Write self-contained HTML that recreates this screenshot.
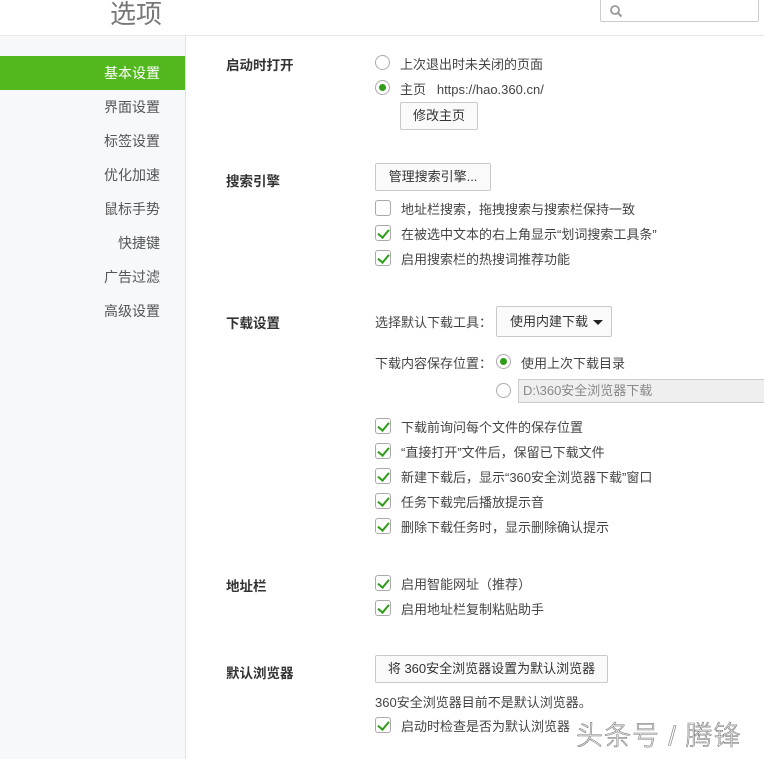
<!DOCTYPE html>
<html><head><meta charset="utf-8"><style>
*{margin:0;padding:0;box-sizing:border-box}
body{width:764px;height:759px;overflow:hidden;background:#fff;font-family:"Liberation Sans","Noto Sans CJK SC",sans-serif;font-size:13px;color:#333;position:relative}
.a{position:absolute;white-space:nowrap}
.title{left:110px;top:-6px;font-size:26px;color:#777}
.search{left:600px;top:-2px;width:159px;height:24px;border:1px solid #ccc;border-radius:2px}
.hline{left:0;top:35px;width:764px;height:1px;background:#e8e8e8}
.side{left:0;top:36px;width:186px;height:723px;background:#f7f8fa;border-right:1px solid #e2e2e2}
.nav{left:0;width:185px;height:34px;line-height:34px;text-align:right;padding-right:25px;color:#555;font-size:14px}
.nav.on{background:#52b81d;color:#fff}
.h{left:226px;font-weight:bold;font-size:13.5px;color:#333}
.cb{width:16px;height:16px;border:1px solid #aaa;border-radius:3px;background:#fff;left:375px}
.cb.k::after{content:"";position:absolute;left:4px;top:1px;width:5px;height:9px;border:solid #2f9d1a;border-width:0 2.5px 2.5px 0;transform:rotate(40deg)}
.rd{width:15px;height:15px;border:1px solid #aaa;border-radius:50%;background:#fff}
.rd.k::after{content:"";position:absolute;left:3px;top:3px;width:7px;height:7px;border-radius:50%;background:#2f9d1a}
.t{color:#444}
.btn{border:1px solid #c9c9c9;border-radius:2px;background:#fafafa;height:28px;line-height:26px;text-align:center;color:#333}
</style></head><body>
<div class="a title">选项</div>
<div class="a search"><svg width="14" height="14" style="position:absolute;left:8px;top:5px"><circle cx="6" cy="6" r="4" fill="none" stroke="#999" stroke-width="1.8"/><line x1="9" y1="9" x2="12.5" y2="12.5" stroke="#999" stroke-width="2"/></svg></div>
<div class="a hline"></div>
<div class="a side"></div>
<div class="a nav on" style="top:56px">基本设置</div>
<div class="a nav" style="top:90px">界面设置</div>
<div class="a nav" style="top:124px">标签设置</div>
<div class="a nav" style="top:158px">优化加速</div>
<div class="a nav" style="top:192px">鼠标手势</div>
<div class="a nav" style="top:226px">快捷键</div>
<div class="a nav" style="top:260px">广告过滤</div>
<div class="a nav" style="top:294px">高级设置</div>

<div class="a h" style="top:54px">启动时打开</div>
<div class="a rd" style="left:375px;top:55px"></div><div class="a t" style="left:400px;top:54px">上次退出时未关闭的页面</div>
<div class="a rd k" style="left:375px;top:80px"></div><div class="a t" style="left:400px;top:79px">主页&nbsp;&nbsp;&nbsp;https://hao.360.cn/</div>
<div class="a btn" style="left:400px;top:102px;width:78px">修改主页</div>

<div class="a h" style="top:170px">搜索引擎</div>
<div class="a btn" style="left:375px;top:163px;width:116px">管理搜索引擎...</div>
<div class="a cb" style="top:200px"></div><div class="a t" style="left:401px;top:199px">地址栏搜索，拖拽搜索与搜索栏保持一致</div>
<div class="a cb k" style="top:225px"></div><div class="a t" style="left:401px;top:224px">在被选中文本的右上角显示“划词搜索工具条”</div>
<div class="a cb k" style="top:250px"></div><div class="a t" style="left:401px;top:249px">启用搜索栏的热搜词推荐功能</div>

<div class="a h" style="top:312px">下载设置</div>
<div class="a t" style="left:375px;top:312px">选择默认下载工具：</div>
<div class="a btn" style="left:496px;top:306px;width:116px;text-align:left;padding-left:13px;height:31px;line-height:29px">使用内建下载<span style="position:absolute;right:8px;top:13px;border:5px solid transparent;border-top:5px solid #222;border-bottom:0"></span></div>
<div class="a t" style="left:375px;top:353px">下载内容保存位置：</div>
<div class="a rd k" style="left:496px;top:354px"></div><div class="a t" style="left:521px;top:353px">使用上次下载目录</div>
<div class="a rd" style="left:496px;top:383px"></div>
<div class="a" style="left:518px;top:379px;width:250px;height:24px;border:1px solid #ccc;background:#efefef;color:#888;line-height:22px;padding-left:4px">D:\360安全浏览器下载</div>
<div class="a cb k" style="top:418px"></div><div class="a t" style="left:401px;top:417px">下载前询问每个文件的保存位置</div>
<div class="a cb k" style="top:443px"></div><div class="a t" style="left:401px;top:442px">“直接打开”文件后，保留已下载文件</div>
<div class="a cb k" style="top:468px"></div><div class="a t" style="left:401px;top:467px">新建下载后，显示“360安全浏览器下载”窗口</div>
<div class="a cb k" style="top:493px"></div><div class="a t" style="left:401px;top:492px">任务下载完后播放提示音</div>
<div class="a cb k" style="top:518px"></div><div class="a t" style="left:401px;top:517px">删除下载任务时，显示删除确认提示</div>

<div class="a h" style="top:575px">地址栏</div>
<div class="a cb k" style="top:575px"></div><div class="a t" style="left:401px;top:574px">启用智能网址（推荐）</div>
<div class="a cb k" style="top:600px"></div><div class="a t" style="left:401px;top:599px">启用地址栏复制粘贴助手</div>

<div class="a h" style="top:662px">默认浏览器</div>
<div class="a btn" style="left:375px;top:655px;width:233px">将 360安全浏览器设置为默认浏览器</div>
<div class="a t" style="left:375px;top:692px">360安全浏览器目前不是默认浏览器。</div>
<div class="a cb k" style="top:717px"></div><div class="a t" style="left:401px;top:716px">启动时检查是否为默认浏览器</div>
<div class="a" style="left:576px;top:714px;font-size:27px;font-weight:300;color:#fff;-webkit-text-stroke:0.6px #777;letter-spacing:1px">头条号 / 腾锋</div>
</body></html>
